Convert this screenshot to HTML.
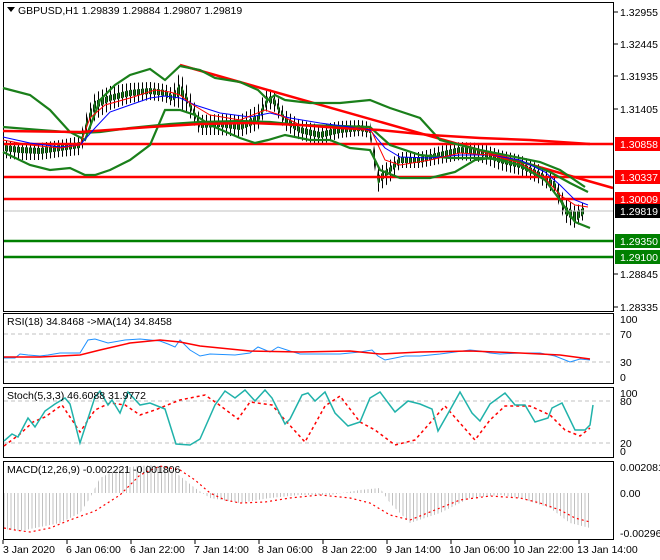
<!DOCTYPE html>
<html><head><meta charset="utf-8"><style>
body{margin:0;background:#fff;}
svg{display:block;font-family:"Liberation Sans",sans-serif;font-size:10.5px;}
</style></head><body>
<svg width="660" height="560" viewBox="0 0 660 560" xmlns="http://www.w3.org/2000/svg">
<defs>
<pattern id="hp" x="0" y="0" width="3.5" height="10" patternUnits="userSpaceOnUse"><rect x="0" y="0" width="1" height="10" fill="#c0c0c0"/></pattern>
<pattern id="wk" x="1" y="0" width="4" height="10" patternUnits="userSpaceOnUse"><rect x="1" y="0" width="1" height="10" fill="#000"/></pattern>
<pattern id="bd" x="1" y="0" width="4" height="10" patternUnits="userSpaceOnUse"><rect x="0" y="0" width="3" height="10" fill="#000"/><rect x="0.6" y="0" width="1.8" height="10" fill="#1a7f1a"/></pattern>
</defs>
<rect width="660" height="560" fill="#fff"/>
<g fill="none" stroke="#000" stroke-width="1">
<rect x="3.5" y="2.5" width="610" height="309"/>
<rect x="3.5" y="313.5" width="610" height="70"/>
<rect x="3.5" y="387.5" width="610" height="70"/>
<rect x="3.5" y="461.5" width="610" height="78"/>
</g>
<!-- MACD histogram -->
<polygon fill="url(#hp)" points="4,529 20,531 60,523 80,513 90,498 100,478 120,468 150,465 170,468 195,488 210,498 240,503 270,498 300,495 330,495 360,490 380,488 390,503 410,523 440,513 470,498 500,495 520,498 550,508 570,523 590,528 590,493 4,493"/>
<!-- candles -->
<polygon fill="url(#wk)" points="4,140 20,143 40,143 60,140 80,136 88,108 95,93 110,86 130,83 150,82 165,84 172,88 180,72 188,88 200,115 220,114 240,115 258,105 268,88 275,92 285,110 300,120 320,125 340,121 360,120 370,122 378,168 390,160 400,152 420,152 440,146 460,142 480,143 500,150 520,155 540,165 555,176 565,198 575,206 585,202 585,218 575,228 565,222 555,194 540,184 520,175 500,170 480,162 460,160 440,164 420,168 400,168 390,182 378,192 370,138 360,136 340,138 320,145 300,140 285,130 275,112 268,108 258,130 240,137 220,135 200,135 188,114 180,108 172,106 165,102 150,100 130,103 110,110 95,120 88,134 80,155 60,157 40,160 20,160 4,158"/>
<polygon fill="url(#bd)" points="4,145 20,147 40,148 60,145 80,142 88,116 95,101 110,95 130,90 150,88 165,90 172,95 180,84 188,98 200,122 220,121 240,124 258,115 268,96 275,99 285,117 300,127 320,132 340,127 360,125 370,127 378,176 390,167 400,157 420,157 440,152 460,147 480,149 500,157 520,162 540,172 555,182 565,206 575,212 585,207 585,213 575,222 565,214 555,188 540,178 520,168 500,163 480,155 460,153 440,158 420,163 400,163 390,173 378,184 370,133 360,131 340,133 320,138 300,133 285,123 275,105 268,102 258,123 240,130 220,127 200,128 188,104 180,95 172,101 165,96 150,94 130,96 110,101 95,109 88,124 80,148 60,151 40,154 20,153 4,151"/>
<line x1="4" y1="211" x2="613" y2="211" stroke="#c0c0c0"/>
<g stroke="#ff0000" stroke-width="2.5">
<line x1="4" y1="144" x2="613" y2="144"/>
<line x1="4" y1="177" x2="613" y2="177"/>
<line x1="4" y1="199" x2="613" y2="199"/>
<line x1="180" y1="65" x2="613" y2="188"/>
</g>
<g stroke="#008000" stroke-width="2.5">
<line x1="4" y1="241" x2="613" y2="241"/>
<line x1="4" y1="257" x2="613" y2="257"/>
</g>
<g fill="none" stroke-width="2.2" stroke="#1a7f1a">
<polyline points="3,88 30,95 50,110 70,132 85,140 100,100 115,85 130,75 150,69 165,80 180,66 200,70 215,78 240,82 258,90 268,100 275,95 285,100 310,103 340,103 370,100 390,108 420,118 440,140 460,145 480,150 510,156 540,162 560,170 585,187"/>
<polyline points="3,152 30,165 50,170 70,168 85,175 95,175 110,170 130,160 150,145 165,110 180,110 195,115 210,125 240,138 255,143 268,140 285,135 310,140 330,140 350,148 370,150 380,170 400,178 430,178 455,172 475,160 490,158 520,165 545,180 560,200 575,222 590,228"/>
<polyline points="3,127 40,130 80,133 100,132 130,128 170,124 200,122 240,121 270,122 300,125 340,126 370,127 390,145 420,155 450,158 480,158 510,160 530,164 550,172 570,183 588,192"/>
</g>
<polyline fill="none" stroke="#ff0000" stroke-width="2.5" points="3,131 80,132 150,127 200,124 250,123 300,125 340,128 380,130 430,135 480,138 530,140 590,144"/>
<polyline fill="none" stroke="#0000ff" stroke-width="1" points="3,137 30,143 60,147 80,145 95,128 110,112 130,105 150,98 165,96 180,98 195,105 220,113 250,117 270,113 290,118 320,123 350,127 370,130 385,148 400,157 430,158 460,155 490,155 520,160 545,172 560,185 575,200 588,205"/>
<polyline fill="none" stroke="#ff0000" stroke-width="1" points="3,140 30,145 60,148 80,145 90,118 105,105 130,98 155,90 170,92 180,95 190,103 210,115 240,120 265,110 280,115 300,125 330,128 360,128 372,132 385,160 400,165 430,160 460,153 490,155 520,163 545,178 560,195 575,205 588,207"/>
<g stroke="#c0c0c0" stroke-dasharray="4,3"><line x1="4" y1="334" x2="613" y2="334"/><line x1="4" y1="362" x2="613" y2="362"/>
<line x1="4" y1="401" x2="613" y2="401"/><line x1="4" y1="443" x2="613" y2="443"/></g>
<polyline fill="none" stroke="#1e90ff" stroke-width="1" points="4,358 15,358 20,354 28,355 40,356 48,355 60,353 80,353 88,340 95,339 108,343 125,340 140,339 160,341 168,344 175,347 180,340 190,350 200,356 210,354 235,355 250,353 258,347 270,352 278,347 290,351 300,354 320,354 340,354 360,352 372,350 378,356 385,360 395,358 405,356 420,356 440,354 455,352 470,350 480,351 490,353 500,354 520,353 540,353 555,356 570,362 580,359 590,360"/>
<polyline fill="none" stroke="#ff0000" stroke-width="1.5" points="4,357 40,357 80,355 100,350 130,343 160,340 180,342 200,346 250,351 300,352 350,351 380,354 420,352 470,351 520,353 560,355 590,359"/>
<polyline fill="none" stroke="#ff0000" stroke-width="1.5" stroke-dasharray="3,3" points="4,446 20,434 33,422 45,417 62,405 80,432 95,410 110,403 125,405 140,415 155,410 180,400 205,395 218,404 238,419 250,402 272,405 285,420 305,442 325,406 340,396 360,422 375,430 395,445 415,440 445,406 475,440 490,420 505,406 530,406 550,415 565,430 580,436 590,428"/>
<polyline fill="none" stroke="#20b2aa" stroke-width="1.5" points="4,441 12,434 18,437 28,418 35,427 45,411 55,404 65,398 70,404 80,443 95,397 100,391 108,405 112,400 120,413 128,392 140,405 150,403 165,409 176,444 190,445 200,439 215,405 225,391 235,398 245,390 255,401 265,390 272,398 285,424 290,419 302,395 308,393 315,401 325,392 335,413 348,426 360,422 370,398 380,392 395,412 408,401 420,404 432,409 438,431 450,410 460,392 472,413 480,421 490,404 505,393 515,405 525,405 535,422 548,418 552,408 562,403 575,430 585,430 590,425 593,405"/>
<polyline fill="none" stroke="#ff0000" stroke-width="1.2" stroke-dasharray="2,3" points="4,528 15,530 30,532 50,528 70,520 95,511 120,495 140,475 160,466 180,470 195,480 210,493 225,500 240,503 265,502 290,498 320,495 350,498 370,503 390,515 410,520 435,510 460,500 490,496 520,498 540,503 560,510 575,518 590,522"/>
<g stroke="#000" stroke-width="1">
<line x1="614" y1="12" x2="618" y2="12"/><line x1="614" y1="44" x2="618" y2="44"/><line x1="614" y1="76" x2="618" y2="76"/><line x1="614" y1="109" x2="618" y2="109"/><line x1="614" y1="274" x2="618" y2="274"/><line x1="614" y1="307" x2="618" y2="307"/>
</g>
<g font-size="10.5">
<text x="620" y="16">1.32955</text><text x="620" y="48">1.32445</text><text x="620" y="80">1.31935</text><text x="620" y="113">1.31405</text><text x="620" y="278">1.28845</text><text x="620" y="311">1.28335</text>
<rect x="615" y="137" width="45" height="14" fill="#ff0000"/><text x="620" y="148" fill="#fff">1.30858</text>
<rect x="615" y="170" width="45" height="14" fill="#ff0000"/><text x="620" y="181" fill="#fff">1.30337</text>
<rect x="615" y="192" width="45" height="14" fill="#ff0000"/><text x="620" y="203" fill="#fff">1.30009</text>
<rect x="615" y="204" width="45" height="14" fill="#000"/><text x="620" y="215" fill="#fff">1.29819</text>
<rect x="615" y="234" width="45" height="14" fill="#008000"/><text x="620" y="245" fill="#fff">1.29350</text>
<rect x="615" y="250" width="45" height="14" fill="#008000"/><text x="620" y="261" fill="#fff">1.29100</text>
<text x="620" y="323">100</text><text x="620" y="338">70</text><text x="620" y="366">30</text><text x="620" y="381">0</text>
<text x="620" y="397">100</text><text x="620" y="405">80</text><text x="620" y="447">20</text><text x="620" y="455">0</text>
<text x="620" y="471">0.002081</text><text x="620" y="497">0.00</text><text x="620" y="537">-0.002969</text>
<path d="M7 7h8l-4 5z" fill="#000"/>
<text x="18" y="14">GBPUSD,H1  1.29839 1.29884 1.29807 1.29819</text>
<text x="7" y="325">RSI(18) 34.8468  -&gt;MA(14) 34.8458</text>
<text x="7" y="399">Stoch(5,3,3) 46.6088 31.9772</text>
<text x="7" y="473">MACD(12,26,9) -0.002221 -0.001806</text>
<g stroke="#000"><line x1="3" y1="540" x2="3" y2="544"/><line x1="67" y1="540" x2="67" y2="544"/><line x1="131" y1="540" x2="131" y2="544"/><line x1="195" y1="540" x2="195" y2="544"/><line x1="259" y1="540" x2="259" y2="544"/><line x1="323" y1="540" x2="323" y2="544"/><line x1="387" y1="540" x2="387" y2="544"/><line x1="451" y1="540" x2="451" y2="544"/><line x1="515" y1="540" x2="515" y2="544"/><line x1="579" y1="540" x2="579" y2="544"/></g>
<text x="3" y="553">3 Jan 2020</text><text x="66" y="553">6 Jan 06:00</text><text x="130" y="553">6 Jan 22:00</text><text x="194" y="553">7 Jan 14:00</text><text x="258" y="553">8 Jan 06:00</text><text x="322" y="553">8 Jan 22:00</text><text x="386" y="553">9 Jan 14:00</text><text x="449" y="553">10 Jan 06:00</text><text x="513" y="553">10 Jan 22:00</text><text x="577" y="553">13 Jan 14:00</text>
</g>
</svg>
</body></html>
